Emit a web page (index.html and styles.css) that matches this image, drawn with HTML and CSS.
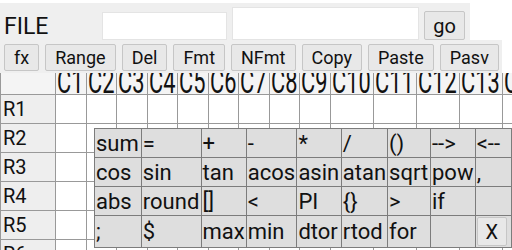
FILE: index.html
```html
<!DOCTYPE html>
<html lang="en">
<head>
    <meta charset="UTF-8">
    <meta name="viewport" content="width=device-width, initial-scale=1.0">
    <title>Sheet</title>
    <link rel="stylesheet" href="styles.css">
</head>
<body>
    <div class="bar file-bar">
        <span class="file-label">FILE</span>
        <input type="text" class="file-name">
        <input type="text" class="file-path">
        <button class="btn go">go</button>
    </div>
    <div class="bar tool-bar">
        <button class="btn">fx</button>
        <button class="btn">Range</button>
        <button class="btn">Del</button>
        <button class="btn">Fmt</button>
        <button class="btn">NFmt</button>
        <button class="btn">Copy</button>
        <button class="btn">Paste</button>
        <button class="btn">Pasv</button>
    </div>

    <div class="sheet-wrap">
        <table class="sheet">
            <colgroup>
                <col class="rh">
                <col class="c1"><col class="c1"><col class="c1"><col class="c1"><col class="c1">
                <col class="c1"><col class="c1"><col class="c1"><col class="c1">
                <col class="c2"><col class="c2"><col class="c2"><col class="c2"><col class="c2">
            </colgroup>
            <tr class="col-head">
                <th></th>
                <th><div><span>C1</span></div></th><th><div><span>C2</span></div></th>
                <th><div><span>C3</span></div></th><th><div><span>C4</span></div></th>
                <th><div><span>C5</span></div></th><th><div><span>C6</span></div></th>
                <th><div><span>C7</span></div></th><th><div><span>C8</span></div></th>
                <th><div><span>C9</span></div></th><th><div><span>C10</span></div></th>
                <th><div><span>C11</span></div></th><th><div><span>C12</span></div></th>
                <th><div><span>C13</span></div></th><th><div><span>C14</span></div></th>
            </tr>
            <tr><th>R1</th><td></td><td></td><td></td><td></td><td></td><td></td><td></td><td></td><td></td><td></td><td></td><td></td><td></td><td></td></tr>
            <tr><th>R2</th><td></td><td></td><td></td><td></td><td></td><td></td><td></td><td></td><td></td><td></td><td></td><td></td><td></td><td></td></tr>
            <tr><th>R3</th><td></td><td></td><td></td><td></td><td></td><td></td><td></td><td></td><td></td><td></td><td></td><td></td><td></td><td></td></tr>
            <tr><th>R4</th><td></td><td></td><td></td><td></td><td></td><td></td><td></td><td></td><td></td><td></td><td></td><td></td><td></td><td></td></tr>
            <tr><th>R5</th><td></td><td></td><td></td><td></td><td></td><td></td><td></td><td></td><td></td><td></td><td></td><td></td><td></td><td></td></tr>
            <tr><th>R6</th><td></td><td></td><td></td><td></td><td></td><td></td><td></td><td></td><td></td><td></td><td></td><td></td><td></td><td></td></tr>
        </table>

        <table class="keys">
            <colgroup>
                <col style="width:48px"><col style="width:60px"><col style="width:45px">
                <col style="width:51px"><col style="width:45px"><col style="width:46px">
                <col style="width:44px"><col style="width:45px"><col style="width:40px">
            </colgroup>
            <tr><td>sum</td><td>=</td><td>+</td><td>-</td><td>*</td><td>/</td><td>()</td><td>--&gt;</td><td>&lt;--</td></tr>
            <tr><td>cos</td><td>sin</td><td>tan</td><td>acos</td><td>asin</td><td>atan</td><td>sqrt</td><td>pow</td><td>,</td></tr>
            <tr><td>abs</td><td>round</td><td>[]</td><td>&lt;</td><td>PI</td><td>{}</td><td>&gt;</td><td>if</td><td></td></tr>
            <tr class="last"><td>;</td><td>$</td><td>max</td><td>min</td><td>dtor</td><td>rtod</td><td>for</td><td></td><td><button class="btn close">X</button></td></tr>
        </table>
    </div>
</body>
</html>
```

FILE: styles.css
```css
body {
    margin: 0;
    font-family: Roboto, "Liberation Sans", sans-serif;
    color: #111;
    background: #fff;
    overflow: hidden;
}
.bar {
    position: relative;
    z-index: 1;
    display: flex;
    box-sizing: border-box;
    background: #efefef;
}
.file-bar {
    width: 470px;
    height: 37px;
    margin-top: 3px;
    padding-left: 4px;
    align-items: flex-end;
    gap: 5px;
}
.file-label {
    width: 93px;
    font-size: 23px;
    line-height: 27px;
}
.file-name, .file-path {
    box-sizing: border-box;
    border: 1px solid #e4e4e4;
    background: #fff;
    padding: 0;
    margin: 0;
}
.file-name {
    width: 125px;
    height: 28px;
}
.file-path {
    width: 187px;
    height: 33px;
}
.tool-bar {
    width: 502px;
    height: 33px;
    padding: 4px 0 0 4px;
    gap: 6px;
}
.btn {
    box-sizing: border-box;
    height: 27px;
    margin: 0;
    padding: 0 9px;
    font-family: Roboto, "Liberation Sans", sans-serif;
    font-size: 18px;
    color: #111;
    background: #e8e8e8;
    border: 1px solid #c6c6c6;
    border-radius: 2px;
}
.go {
    width: 41px;
    height: 29px;
    padding: 0;
    font-size: 20px;
}
.sheet-wrap {
    position: relative;
    width: 512px;
    overflow: hidden;
}
.sheet {
    border-collapse: collapse;
    table-layout: fixed;
    width: 545px;
}
.sheet .rh { width: 55px; }
.sheet .c1 { width: 30.5px; }
.sheet .c2 { width: 43px; }
.sheet th, .sheet td {
    border: 1px solid #999;
    padding: 0;
    height: 28px;
}
.sheet th {
    background: #eee;
    font-weight: normal;
    text-align: left;
    font-size: 20px;
    padding-left: 2px;
}
.col-head th {
    height: 21px;
    border-top: none;
    background: #f4f4f4;
    padding-left: 1px;
}
.col-head th div {
    height: 21px;
    overflow: hidden;
    white-space: nowrap;
}
.col-head th span {
    display: inline-block;
    font-size: 33px;
    line-height: 17px;
    transform: scaleX(0.66);
    transform-origin: left;
}
.keys {
    position: absolute;
    left: 94px;
    top: 55px;
    border-collapse: collapse;
    table-layout: fixed;
    background: #dedede;
    font-size: 22px;
}
.keys td {
    border: 1px solid #7c7c7c;
    padding: 0 1px;
    height: 28px;
    white-space: nowrap;
    overflow: hidden;
}
.keys .last td {
    height: 31px;
}
.close {
    width: 30px;
    height: 29px;
    padding: 0;
    font-size: 20px;
    vertical-align: bottom;
}
```
